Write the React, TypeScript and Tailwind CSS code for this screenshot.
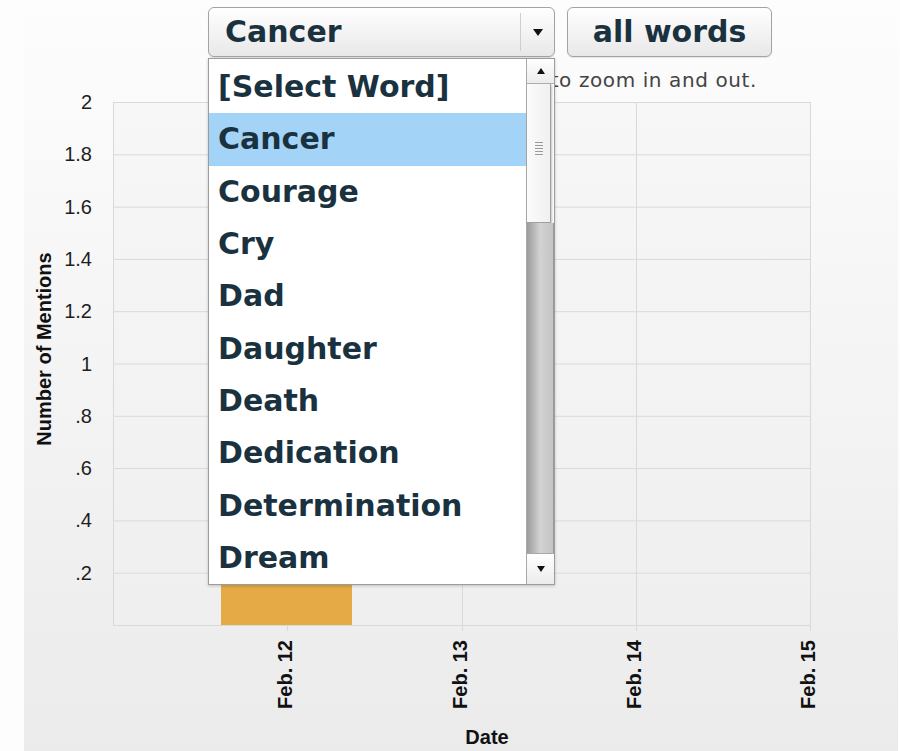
import React from "react";

const words = [
  "[Select Word]",
  "Cancer",
  "Courage",
  "Cry",
  "Dad",
  "Daughter",
  "Death",
  "Dedication",
  "Determination",
  "Dream",
];

const yLabels = ["2", "1.8", "1.6", "1.4", "1.2", "1", ".8", ".6", ".4", ".2"];
const ticks = [
  { x: 263, label: "Feb. 12" },
  { x: 438, label: "Feb. 13" },
  { x: 612, label: "Feb. 14" },
  { x: 786, label: "Feb. 15" },
];

function Chart() {
  const top = 10;
  const step = 52.3;
  const left = 89;
  const right = 786;
  const bottom = 533;
  return (
    <svg width="874" height="659" className="block" style={{ fontFamily: '"Liberation Sans", Arial, sans-serif' }}>
      <defs>
        <linearGradient id="plotbg" x1="0" y1="0" x2="0" y2="1">
          <stop offset="0" stopColor="#f7f7f7" />
          <stop offset="1" stopColor="#efefef" />
        </linearGradient>
      </defs>
      <rect x={left} y={top} width={right - left} height={bottom - top} fill="url(#plotbg)" />
      {Array.from({ length: 11 }).map((_, i) => (
        <line key={i} x1={left} x2={right} y1={top + i * step + 0.5} y2={top + i * step + 0.5} stroke="#d9d9d9" strokeWidth="1" />
      ))}
      <line x1={left + 0.5} x2={left + 0.5} y1={top} y2={bottom} stroke="#d9d9d9" />
      {ticks.map((t) => (
        <line key={t.x} x1={t.x + 0.5} x2={t.x + 0.5} y1={top} y2={bottom + 6} stroke="#d9d9d9" />
      ))}
      <rect x={197} y={492} width={131} height={41} fill="#e5aa46" />
      {yLabels.map((l, i) => (
        <text key={l} x={68} y={top + i * step} textAnchor="end" dominantBaseline="central" fontSize="20" fill="#1e1e1e">
          {l}
        </text>
      ))}
      <text
        transform="translate(20 257) rotate(-90)"
        textAnchor="middle"
        dominantBaseline="central"
        fontSize="20"
        fontWeight="bold"
        fill="#111"
      >
        Number of Mentions
      </text>
      {ticks.map((t) => (
        <text
          key={t.label}
          transform={`translate(${t.x - 2} 548) rotate(-90)`}
          textAnchor="end"
          dominantBaseline="central"
          fontSize="20"
          fontWeight="bold"
          fill="#111"
        >
          {t.label}
        </text>
      ))}
      <text x={463} y={645} textAnchor="middle" dominantBaseline="central" fontSize="20" fontWeight="bold" fill="#111">
        Date
      </text>
    </svg>
  );
}

function Scrollbar() {
  return (
    <div className="absolute right-0 top-0 bottom-0 w-[28px] flex flex-col border-l border-[#a8a8a8] bg-white">
      <div className="h-[25px] flex items-center justify-center border-b border-[#b0b0b0] bg-gradient-to-b from-white to-[#ececec]">
        <div className="w-0 h-0 border-l-[4px] border-r-[4px] border-b-[6px] border-l-transparent border-r-transparent border-b-[#111]" />
      </div>
      <div className="h-[139px] flex items-center justify-center border-b border-r border-[#a0a0a0] bg-gradient-to-r from-[#fbfbfb] to-[#f0f0f0] shadow-[1px_1px_2px_rgba(0,0,0,0.25)] mr-[3px]">
        <div className="flex flex-col gap-[2px] -mt-[10px]">
          <div className="w-[8px] h-px bg-[#9a9a9a]" />
          <div className="w-[8px] h-px bg-[#9a9a9a]" />
          <div className="w-[8px] h-px bg-[#9a9a9a]" />
          <div className="w-[8px] h-px bg-[#9a9a9a]" />
          <div className="w-[8px] h-px bg-[#9a9a9a]" />
        </div>
      </div>
      <div className="flex-1 bg-gradient-to-r from-[#9c9c9c] via-[#d2d2d2] to-[#c4c4c4] border-r border-[#9a9a9a]" />
      <div className="h-[31px] flex items-center justify-center border-t border-[#a8a8a8] bg-gradient-to-b from-white to-[#ececec]">
        <div className="w-0 h-0 border-l-[4px] border-r-[4px] border-t-[6px] border-l-transparent border-r-transparent border-t-[#111]" />
      </div>
    </div>
  );
}

export default function App() {
  return (
    <div className="w-[900px] h-[751px] bg-[#fdfdfd] overflow-hidden">
      <div className="ml-[24px] w-[874px] h-[751px] bg-gradient-to-b from-[#fdfdfd] via-[#f4f4f4] to-[#ebebeb] flex flex-col">
        <div className="flex pt-[7px] pl-[184px] gap-[12px]" style={{ fontFamily: '"DejaVu Sans", Verdana, sans-serif' }}>
          <div className="relative w-[347px] h-[50px]">
            <div className="w-full h-full rounded-[6px] border border-[#a3a3a3] bg-gradient-to-b from-white to-[#e8e8e8] flex items-center shadow-[0_1px_1px_rgba(0,0,0,0.1)]">
              <div className="flex-1 pl-[16px] text-[30px] font-bold text-[#1a3240] leading-none">Cancer</div>
              <div className="w-px h-[38px] bg-[#cfcfcf]" />
              <div className="w-[33px] flex items-center justify-center">
                <div className="w-0 h-0 border-l-[5px] border-r-[5px] border-t-[7px] border-l-transparent border-r-transparent border-t-[#111]" />
              </div>
            </div>
            <div className="absolute left-0 top-[51px] w-[347px] h-[527px] bg-white border border-[#9c9c9c] z-10 shadow-[0_1px_3px_rgba(0,0,0,0.2)]">
              <div className="pt-[2px] pr-[28px]">
                {words.map((w) => (
                  <div
                    key={w}
                    className={
                      "h-[52.3px] flex items-center pl-[9px] text-[30px] font-bold text-[#1a3240] leading-none " +
                      (w === "Cancer" ? "bg-[#a3d4f7]" : "")
                    }
                  >
                    {w}
                  </div>
                ))}
              </div>
              <Scrollbar />
            </div>
          </div>
          <div className="w-[205px] h-[50px] rounded-[6px] border border-[#a3a3a3] bg-gradient-to-b from-white to-[#e8e8e8] flex items-center justify-center text-[30px] font-bold text-[#1a3240] leading-none shadow-[0_1px_1px_rgba(0,0,0,0.1)]">
            all words
          </div>
        </div>
        <div
          className="mt-[11px] h-[24px] leading-[24px] text-right pr-[141px] text-[20px] text-[#444] tracking-[0.6px]"
          style={{ fontFamily: '"DejaVu Sans", Verdana, sans-serif' }}
        >
          Click and drag to zoom in and out.
        </div>
        <Chart />
      </div>
    </div>
  );
}
